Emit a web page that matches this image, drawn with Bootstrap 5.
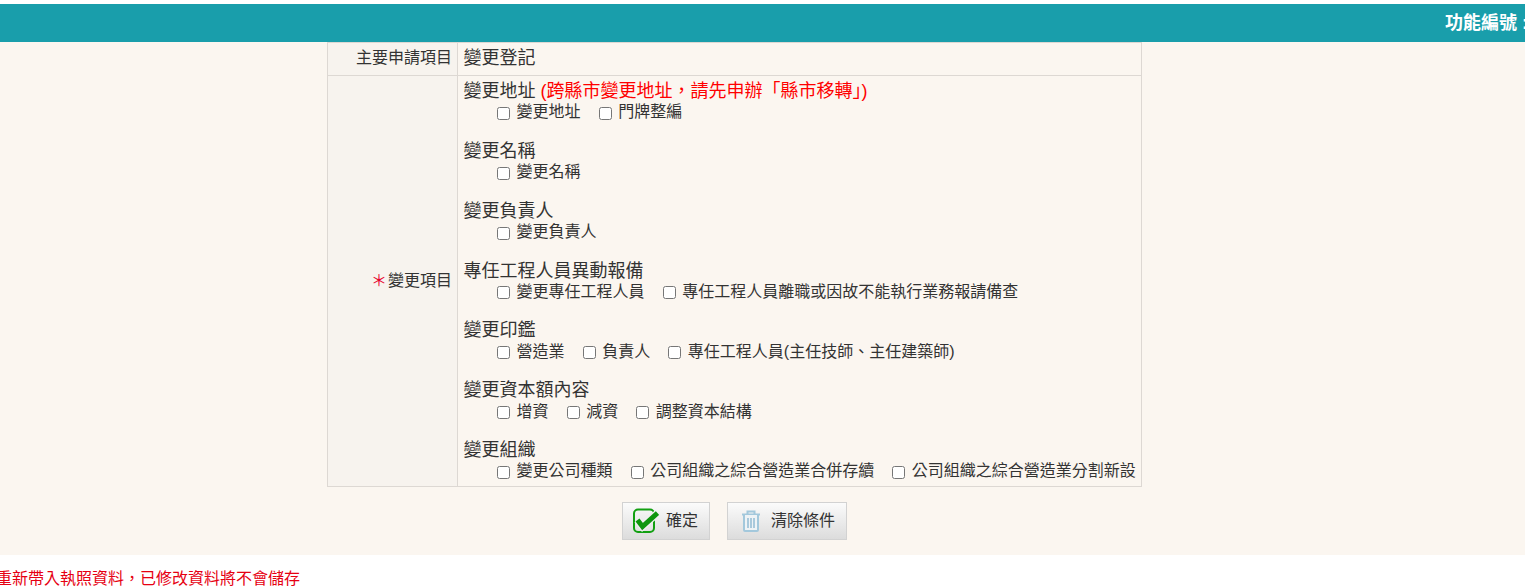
<!DOCTYPE html>
<html lang="zh-Hant">
<head>
<meta charset="utf-8">
<title>變更登記</title>
<link href="https://cdn.jsdelivr.net/npm/bootstrap@5.3.0/dist/css/bootstrap.min.css" rel="stylesheet">
<style>
html,body{height:100%;overflow:hidden}
body{font-family:"Liberation Sans","Noto Sans CJK TC",sans-serif;font-size:16px;color:#333;background:#fff;line-height:1.25}
.top-gap{height:4px}
.title-bar{height:38px;background:#199eab;color:#fff;font-weight:700;font-size:18px;line-height:38px;white-space:nowrap;overflow:hidden}
.title-text{margin-right:-108px}
.cream{background:#fbf6f0;height:513px}
.form-wrap{width:815px;margin-left:327px}
.form-tbl{width:815px;border-collapse:collapse;table-layout:fixed}
.form-tbl td{border:1px solid #ddd8d3;padding:0}
.form-tbl td.lab{width:130px;background:#f7f3ee;text-align:right;padding-right:5px;vertical-align:middle}
.form-tbl td.val{padding-left:5.6px;padding-right:5px}
.form-tbl .row-head td{height:33px;font-size:16px;padding-bottom:2px}
.form-tbl .row-head td.val{font-size:18px}
.star{color:#e8002d;font-size:16px;margin-right:1px}
.grp{height:59.85px;padding-top:3px}
.grp-last{height:51px}
.grp-title{font-size:18px;line-height:25.4px;height:23.4px}
.warn{color:#f00}
.opts{padding-left:33.4px;line-height:20px;height:20px;display:flex;white-space:nowrap}
.opts label{display:flex;align-items:center;margin-right:18px;font-size:16px}
.opts input{margin:2px 6.6px 0 0;width:13px;height:13px}
.act-row{padding-top:15px;gap:17px}
.act-btn{height:38px;border:1px solid #d2d2d2;background:linear-gradient(#fbfbfb,#dcdcdc);border-radius:0;font-size:16px;color:#333;padding:0;display:flex;align-items:center}
.btn-ok{width:88px;padding-left:10px;gap:7px}
.btn-clear{width:120px;padding-left:13px;gap:10px}
.note{color:#e60012;font-size:16px;margin:14px 0 0 -4px;line-height:20px;white-space:nowrap}
</style>
</head>
<body>
<div class="top-gap"></div>
<div class="title-bar d-flex justify-content-end"><span class="title-text">功能編號 : 0000000000</span></div>
<div class="cream">
<div class="form-wrap">
<table class="form-tbl">
<tr class="row-head"><td class="lab">主要申請項目</td><td class="val">變更登記</td></tr>
<tr>
<td class="lab"><span class="star">＊</span>變更項目</td>
<td class="val">
<div class="grp"><div class="grp-title">變更地址 <span class="warn">(跨縣市變更地址，請先申辦「縣市移轉」)</span></div>
<div class="opts"><label><input type="checkbox">變更地址</label><label><input type="checkbox">門牌整編</label></div></div>
<div class="grp"><div class="grp-title">變更名稱</div>
<div class="opts"><label><input type="checkbox">變更名稱</label></div></div>
<div class="grp"><div class="grp-title">變更負責人</div>
<div class="opts"><label><input type="checkbox">變更負責人</label></div></div>
<div class="grp"><div class="grp-title">專任工程人員異動報備</div>
<div class="opts"><label><input type="checkbox">變更專任工程人員</label><label><input type="checkbox">專任工程人員離職或因故不能執行業務報請備查</label></div></div>
<div class="grp"><div class="grp-title">變更印鑑</div>
<div class="opts"><label><input type="checkbox">營造業</label><label><input type="checkbox">負責人</label><label><input type="checkbox">專任工程人員(主任技師、主任建築師)</label></div></div>
<div class="grp"><div class="grp-title">變更資本額內容</div>
<div class="opts"><label><input type="checkbox">增資</label><label><input type="checkbox">減資</label><label><input type="checkbox">調整資本結構</label></div></div>
<div class="grp grp-last"><div class="grp-title">變更組織</div>
<div class="opts"><label><input type="checkbox">變更公司種類</label><label><input type="checkbox">公司組織之綜合營造業合併存續</label><label><input type="checkbox">公司組織之綜合營造業分割新設</label></div></div>
</td>
</tr>
</table>
<div class="d-flex justify-content-center act-row">
<button type="button" class="act-btn btn-ok"><svg width="26" height="26" viewBox="0 0 26 26"><rect x="1" y="1.500" width="20" height="22.500" rx="4" fill="none" stroke="#12a012" stroke-width="2"/><path d="M4.500 12l5 6.500L24.500 5" fill="none" stroke="#f0f0f0" stroke-width="7.500"/><path d="M4.500 12l5 6.500L24.500 5" fill="none" stroke="#0e960e" stroke-width="5"/></svg>確定</button>
<button type="button" class="act-btn btn-clear"><svg width="20" height="22" viewBox="0 0 20 22"><path d="M1 4.500h18M6.500 4V1.500h7V4" fill="none" stroke="#a3c8dc" stroke-width="2"/><path d="M3 5v15a1 1 0 0 0 1 1h12a1 1 0 0 0 1-1V5" fill="#eef3f6" stroke="#a3c8dc" stroke-width="2"/><path d="M7 8v10M10 8v10M13 8v10" stroke="#a9c9dc" stroke-width="2"/></svg>清除條件</button>
</div>
</div>
</div>
<div class="note">重新帶入執照資料，已修改資料將不會儲存</div>
</body>
</html>
